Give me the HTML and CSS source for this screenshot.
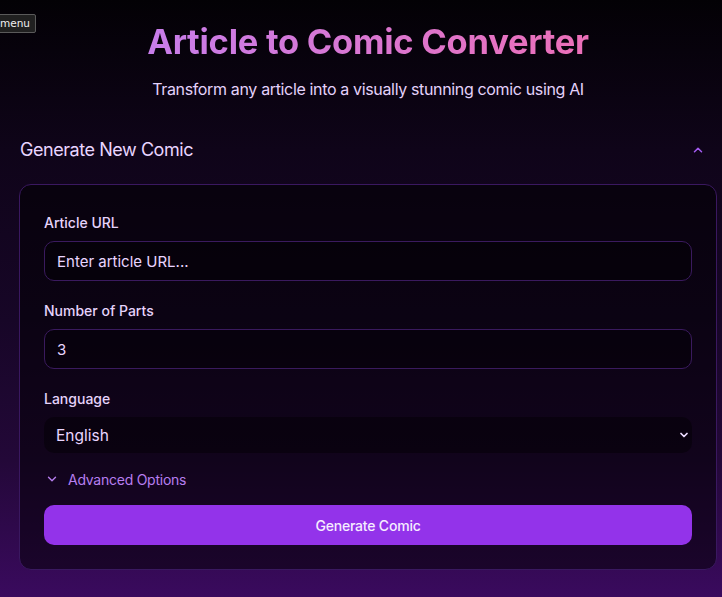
FILE: index.html
```html
<!DOCTYPE html>
<html lang="en">
<head>
<meta charset="utf-8">
<title>Article to Comic Converter</title>
<link rel="stylesheet" href="styles.css">
</head>
<body>
<div class="menu-badge">menu</div>
<main class="page">
  <header class="hero">
    <h1 class="title">Article to Comic Converter</h1>
    <p class="subtitle">Transform any article into a visually stunning comic using AI</p>
  </header>
  <section class="panel">
    <div class="panel-head">
      <h2 class="panel-title">Generate New Comic</h2>
      <svg class="chev-up" width="14" height="14" viewBox="0 0 24 24" fill="none" stroke="currentColor" stroke-width="2.6" stroke-linecap="round" stroke-linejoin="round"><path d="M6 15l6-6 6 6"/></svg>
    </div>
    <form class="card">
      <div class="field">
        <label class="label">Article URL</label>
        <div class="input placeholder">Enter article URL...</div>
      </div>
      <div class="field">
        <label class="label">Number of Parts</label>
        <div class="input">3</div>
      </div>
      <div class="field">
        <label class="label">Language</label>
        <div class="select">
          <span>English</span>
          <svg class="chev-down" width="12" height="12" viewBox="0 0 24 24" fill="none" stroke="currentColor" stroke-width="3.5" stroke-linecap="round" stroke-linejoin="round"><path d="M6 9l6 6 6-6"/></svg>
        </div>
      </div>
      <div class="advanced">
        <svg class="chev-adv" width="14" height="14" viewBox="0 0 24 24" fill="none" stroke="currentColor" stroke-width="2.4" stroke-linecap="round" stroke-linejoin="round"><path d="M6 9l6 6 6-6"/></svg>
        <span>Advanced Options</span>
      </div>
      <button type="button" class="btn">Generate Comic</button>
    </form>
  </section>
</main>
</body>
</html>
```

FILE: styles.css
```css
* { box-sizing: border-box; }
html, body { margin: 0; padding: 0; }
body {
  min-height: 597px;
  font-family: Inter, "Noto Sans", sans-serif;
  background: linear-gradient(180deg, #030105 0px, #0f0419 150px, #170627 320px, #230838 460px, #3a0a5e 597px);
  color: #e9d5ff;
  position: relative;
  overflow: hidden;
}
.menu-badge {
  position: absolute;
  left: -8px;
  top: 14px;
  height: 19px;
  padding: 0 5px 0 7px;
  background: #202020;
  border: 1px solid #5a5a5a;
  border-radius: 2px;
  color: #f0f0f0;
  font-size: 10.5px;
  line-height: 17px;
  font-family: "DejaVu Sans", sans-serif;
}
.page {
  margin-left: 19px;
  width: 698px;
  padding-top: 22px;
}
.hero { text-align: center; }
.title {
  margin: 0;
  font-size: 34.5px;
  line-height: 40px;
  font-weight: 700;
  letter-spacing: -0.25px;
  background: linear-gradient(90deg, #c77dea, #ec6fb8);
  -webkit-background-clip: text;
  background-clip: text;
  color: transparent;
  display: inline-block;
}
.subtitle {
  margin: 15px 0 0;
  font-size: 16px;
  line-height: 24px;
  letter-spacing: -0.35px;
  color: #e4d2fb;
}
.panel { margin-top: 35px; }
.panel-head {
  display: flex;
  align-items: center;
  justify-content: space-between;
  height: 28px;
  padding: 0 12px 0 1px;
}
.panel-title {
  margin: 0;
  font-size: 18px;
  font-weight: 400;
  line-height: 28px;
  letter-spacing: -0.45px;
  color: #e9d5ff;
}
.chev-up { color: #a35bf0; }
.card {
  margin-top: 20px;
  border: 1px solid #3a1860;
  border-radius: 12px;
  background: rgba(0, 0, 0, 0.5);
  padding: 28px 24px 24px;
  display: flex;
  flex-direction: column;
}
.field {
  display: flex;
  flex-direction: column;
  gap: 8px;
  margin-bottom: 20px;
}
.label {
  font-size: 14px;
  line-height: 20px;
  font-weight: 500;
  color: #e6d3fb;
}
.input {
  height: 40px;
  border: 1px solid #3a1a5e;
  border-radius: 10px;
  background: rgba(0, 0, 0, 0.35);
  padding: 0 12px;
  display: flex;
  align-items: center;
  font-size: 15px;
  color: #e9d5ff;
}
.select {
  height: 36px;
  border-radius: 10px;
  background: rgba(0, 0, 0, 0.4);
  padding: 0 0 0 12px;
  display: flex;
  align-items: center;
  justify-content: space-between;
  font-size: 15.5px;
  color: #e9d5ff;
  margin-bottom: -4px;
}
.chev-down { color: #ecdcff; margin-right: 2px; }
.advanced {
  display: flex;
  align-items: center;
  gap: 9px;
  height: 20px;
  padding-left: 1px;
  font-size: 14px;
  letter-spacing: -0.25px;
  color: #b77ef0;
  margin-bottom: 16px;
}
.chev-adv { color: #b77ef0; }
.btn {
  height: 40px;
  border: none;
  border-radius: 10px;
  background: #9333ea;
  color: #f5ecff;
  font-family: Inter, "Noto Sans", sans-serif;
  font-size: 14px;
  font-weight: 500;
  letter-spacing: -0.2px;
}
```
